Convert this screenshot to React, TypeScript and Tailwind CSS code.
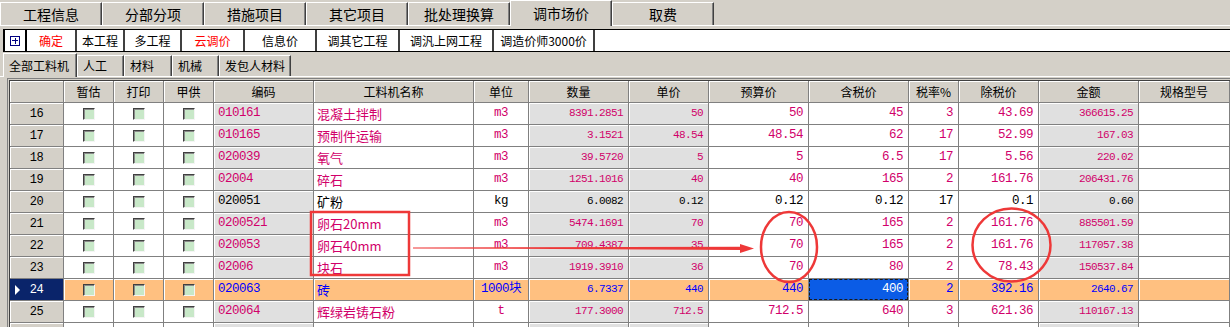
import React from "react";

const mono = "font-['Liberation_Mono','Noto_Sans_CJK_SC',monospace]";
const cjk = "font-['Noto_Sans_CJK_SC',sans-serif]";
const cols =
  "grid grid-cols-[54px_50px_50px_50px_100px_160px_55px_100px_80px_100px_100px_50px_80px_100px_1fr]";

type Row = {
  no: string;
  code: string;
  name: string;
  unit: string;
  qty: string;
  price: string;
  budget: string;
  taxIncl: string;
  rate: string;
  exTax: string;
  amount: string;
  c: "m" | "k" | "b";
  sel?: boolean;
};

const rows: Row[] = [
  { no: "16", code: "010161", name: "混凝土拌制", unit: "m3", qty: "8391.2851", price: "50", budget: "50", taxIncl: "45", rate: "3", exTax: "43.69", amount: "366615.25", c: "m" },
  { no: "17", code: "010165", name: "预制件运输", unit: "m3", qty: "3.1521", price: "48.54", budget: "48.54", taxIncl: "62", rate: "17", exTax: "52.99", amount: "167.03", c: "m" },
  { no: "18", code: "020039", name: "氧气", unit: "m3", qty: "39.5720", price: "5", budget: "5", taxIncl: "6.5", rate: "17", exTax: "5.56", amount: "220.02", c: "m" },
  { no: "19", code: "02004", name: "碎石", unit: "m3", qty: "1251.1016", price: "40", budget: "40", taxIncl: "165", rate: "2", exTax: "161.76", amount: "206431.76", c: "m" },
  { no: "20", code: "020051", name: "矿粉", unit: "kg", qty: "6.0082", price: "0.12", budget: "0.12", taxIncl: "0.12", rate: "17", exTax: "0.1", amount: "0.60", c: "k" },
  { no: "21", code: "0200521", name: "卵石20mm", unit: "m3", qty: "5474.1691", price: "70", budget: "70", taxIncl: "165", rate: "2", exTax: "161.76", amount: "885501.59", c: "m" },
  { no: "22", code: "020053", name: "卵石40mm", unit: "m3", qty: "709.4387", price: "35", budget: "70", taxIncl: "165", rate: "2", exTax: "161.76", amount: "117057.38", c: "m" },
  { no: "23", code: "02006", name: "块石", unit: "m3", qty: "1919.3910", price: "36", budget: "70", taxIncl: "80", rate: "2", exTax: "78.43", amount: "150537.84", c: "m" },
  { no: "24", code: "020063", name: "砖", unit: "1000块", qty: "6.7337", price: "440", budget: "440", taxIncl: "400", rate: "2", exTax: "392.16", amount: "2640.67", c: "b", sel: true },
  { no: "25", code: "020064", name: "辉绿岩铸石粉", unit: "t", qty: "177.3000", price: "712.5", budget: "712.5", taxIncl: "640", rate: "3", exTax: "621.36", amount: "110167.13", c: "m" },
  { no: "", code: "", name: "", unit: "", qty: "", price: "", budget: "", taxIncl: "", rate: "", exTax: "", amount: "", c: "k" },
];

const headers = ["", "暂估", "打印", "甲供", "编码", "工料机名称", "单位", "数量", "单价", "预算价", "含税价", "税率%", "除税价", "金额", "规格型号"];

const topTabs = ["工程信息", "分部分项", "措施项目", "其它项目", "批处理换算", "调市场价", "取费"];

const tools = [
  { t: "确定", w: "w-[50px]", red: true },
  { t: "本工程", w: "w-[48px]" },
  { t: "多工程", w: "w-[57px]" },
  { t: "云调价", w: "w-[63px]", red: true },
  { t: "信息价", w: "w-[72px]" },
  { t: "调其它工程", w: "w-[83px]" },
  { t: "调汎上网工程", w: "w-[94px]" },
  { t: "调造价师3000价", w: "w-[101px]" },
];

const subTabs = [
  { t: "全部工料机", w: "w-[74px]" },
  { t: "人工", w: "w-[47px]" },
  { t: "材料", w: "w-[48px]" },
  { t: "机械", w: "w-[47px]" },
  { t: "发包人材料", w: "w-[72px]" },
];

const cellBase = "border-r border-b border-[#808080] flex items-center overflow-hidden whitespace-nowrap";

function Check() {
  return (
    <span className="block w-[12px] h-[12px] bg-[#c8e8c8] border border-t-[#404040] border-l-[#404040] border-r-[#f4f4f4] border-b-[#f4f4f4] shadow-[inset_1px_1px_0_#8a8a8a]" />
  );
}

function DataRow({ r }: { r: Row }) {
  const tc = r.c === "m" ? "text-[#d1006a]" : r.c === "b" ? "text-[#0000ff]" : "text-black";
  const white = r.sel ? "bg-[#ffc080] shadow-[inset_1px_1px_0_#fff]" : "bg-white";
  const gray = r.sel ? "bg-[#ffc080] shadow-[inset_1px_1px_0_#fff]" : "bg-[#e0e0e0] shadow-[inset_1px_1px_0_#fff]";
  const numW = `${mono} text-[12.5px] tracking-[-0.5px] justify-end pr-[5px] ${tc}`;
  const numG = `${mono} text-[11px] tracking-[-0.6px] justify-end pr-[5px] ${tc}`;

  return (
    <div className={`${cols} h-[22px]`}>
      <div
        className={`${cellBase} justify-center relative ${mono} text-[12px] tracking-[-0.5px] ${
          r.sel ? "bg-[#0a246a] text-white" : "bg-[#d4d0c8] text-black shadow-[inset_1px_1px_0_#fff]"
        }`}
      >
        {r.sel && (
          <span className="absolute left-[5px] top-[6px] w-0 h-0 border-y-[5px] border-y-transparent border-l-[5px] border-l-white" />
        )}
        {r.no}
      </div>
      {[0, 1, 2].map((i) => (
        <div key={i} className={`${cellBase} justify-center ${white}`}>
          {r.no && <Check />}
        </div>
      ))}
      <div className={`${cellBase} ${gray} ${mono} text-[12.5px] tracking-[-0.5px] pl-[4px] ${tc}`}>{r.code}</div>
      <div className={`${cellBase} ${white} ${cjk} text-[13px] pl-[3px] ${tc}`}>{r.name}</div>
      <div className={`${cellBase} ${white} ${mono} text-[12.5px] tracking-[-0.5px] justify-center ${tc}`}>{r.unit}</div>
      <div className={`${cellBase} ${gray} ${numG}`}>{r.qty}</div>
      <div className={`${cellBase} ${gray} ${numG}`}>{r.price}</div>
      <div className={`${cellBase} ${white} ${numW}`}>{r.budget}</div>
      {r.sel ? (
        <div className={`${cellBase} bg-[#0b5ce6]`}>
          <div className={`w-full h-full border border-dashed border-[#1a1a1a] flex items-center justify-end pr-[4px] ${mono} text-[12.5px] tracking-[-0.5px] text-white`}>
            {r.taxIncl}
          </div>
        </div>
      ) : (
        <div className={`${cellBase} ${white} ${numW}`}>{r.taxIncl}</div>
      )}
      <div className={`${cellBase} ${white} ${numW}`}>{r.rate}</div>
      <div className={`${cellBase} ${white} ${numW}`}>{r.exTax}</div>
      <div className={`${cellBase} ${gray} ${numG}`}>{r.amount}</div>
      <div className={`${cellBase} ${white}`} />
    </div>
  );
}

export default function App() {
  return (
    <div className={`relative w-[1230px] h-[327px] overflow-hidden bg-[#d4d0c8] ${cjk} text-black`}>
      {/* top tabs */}
      <div className="h-[26px] flex items-end border-b border-white">
        {topTabs.map((t, i) =>
          i === 5 ? (
            <div
              key={t}
              className="w-[102px] h-[26px] -mb-px relative z-10 bg-[#d4d0c8] border-t border-l border-white border-r border-r-[#404040] shadow-[inset_-1px_0_0_#808080] flex items-center justify-center text-[14px]"
            >
              {t}
            </div>
          ) : (
            <div
              key={t}
              className="w-[102px] h-[23px] bg-[#d4d0c8] border-t border-l border-white border-r border-r-[#404040] shadow-[inset_-1px_0_0_#808080] flex items-center justify-center text-[14px]"
            >
              {t}
            </div>
          )
        )}
      </div>

      {/* toolbar */}
      <div className="mt-[3px] ml-[3px] h-[23px] flex bg-white border-y border-black border-l-2">
        <div className="w-[22px] h-full border-r-2 border-black flex items-center justify-center">
          <span className="relative w-[10px] h-[10px] border border-[#000080] flex items-center justify-center">
            <span className="absolute w-[6px] h-px bg-[#000080]" />
            <span className="absolute w-px h-[6px] bg-[#000080]" />
          </span>
        </div>
        {tools.map((b) => (
          <div
            key={b.t}
            className={`${b.w} h-full border-r-2 border-[#404040] flex items-center justify-center text-[12px] ${
              b.red ? "text-[#ff0000]" : "text-black"
            }`}
          >
            {b.t}
          </div>
        ))}
      </div>

      {/* sub tabs */}
      <div className="mt-[1px] h-[24px] flex items-end border-b border-white pl-[3px]">
        {subTabs.map((s, i) => (
          <div
            key={s.t}
            className={`${s.w} ${
              i === 0 ? "h-[24px] -mb-px relative z-10" : "h-[21px]"
            } bg-[#d4d0c8] border-t border-l border-white border-r border-r-[#404040] shadow-[inset_-1px_0_0_#808080] flex items-center pl-[5px] text-[12px]`}
          >
            {s.t}
          </div>
        ))}
      </div>

      {/* grid */}
      <div className="mt-[1px] ml-[7px] border-l border-t border-[#808080]">
        <div className="ml-[1px] mt-[1px] border-l border-t border-[#404040]">
          <div className={`${cols} h-[22px]`}>
            {headers.map((h, i) => (
              <div
                key={i}
                className={`${cellBase} justify-center bg-[#d4d0c8] shadow-[inset_1px_1px_0_#fff] text-[12px]`}
              >
                {h}
              </div>
            ))}
          </div>
          {rows.map((r, i) => (
            <DataRow key={i} r={r} />
          ))}
        </div>
      </div>

      {/* annotations */}
      <svg className="absolute inset-0 pointer-events-none" width="1230" height="327" viewBox="0 0 1230 327">
        <rect x="311" y="212" width="98" height="63" fill="none" stroke="#ee3838" strokeWidth="2.5" />
        <polygon points="413,247.4 742,246.8 742,250 413,248.4" fill="#ee3838" />
        <polygon points="740,244 754,248.5 740,253" fill="#ee3838" />
        <ellipse cx="789" cy="247" rx="28" ry="35" fill="none" stroke="#ee3838" strokeWidth="2.5" />
        <ellipse cx="1011.5" cy="245" rx="39" ry="36.5" fill="none" stroke="#ee3838" strokeWidth="2.5" />
      </svg>
    </div>
  );
}
